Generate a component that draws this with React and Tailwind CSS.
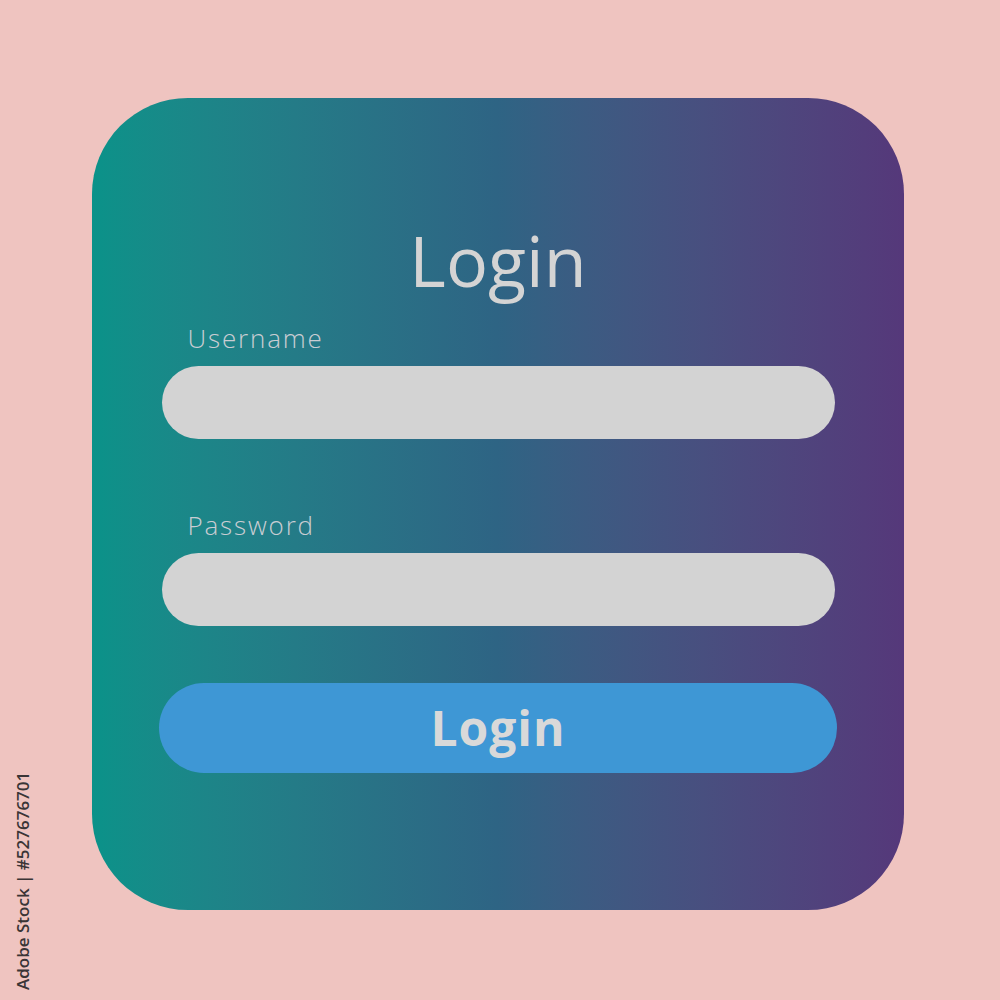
import React from "react";

const Field = ({ label }) => (
  <div className="flex flex-col">
    <div className="flex h-[30px] items-center pl-[26px] text-[26px] font-light tracking-[0.07em] text-[#c9cdd3]">
      {label}
    </div>
    <div className="mt-[13px] h-[73px] w-[673px] rounded-full bg-[#d3d3d3]" />
  </div>
);

export default function App() {
  return (
    <div
      className="relative h-[1000px] w-[1000px] overflow-hidden bg-[#efc4c0] pl-[92px] pt-[98px]"
      style={{ fontFamily: "'Open Sans', Lato, sans-serif" }}
    >
      <div className="flex h-[812px] w-[812px] flex-col items-center rounded-[96px] bg-gradient-to-r from-[#0a9289] via-[#2e6484] to-[#55387a] pt-[122px]">
        <h1 className="flex h-[80px] items-center text-[70px] font-normal leading-none text-[#d4d4d4]">
          Login
        </h1>
        <div className="mt-[23px] flex flex-col gap-[71px]">
          <Field label="Username" />
          <Field label="Password" />
        </div>
        <button className="mt-[57px] flex h-[90px] w-[678px] items-center justify-center rounded-full bg-[#3e97d5] text-[48px] font-bold tracking-[0.02em] text-[#d9d9d9]">
          Login
        </button>
      </div>
      <div className="absolute left-[11px] top-[990px] origin-top-left -rotate-90 whitespace-nowrap text-[17px] font-semibold leading-[24px] text-[#3a3536]">
        Adobe Stock | #527676701
      </div>
    </div>
  );
}
